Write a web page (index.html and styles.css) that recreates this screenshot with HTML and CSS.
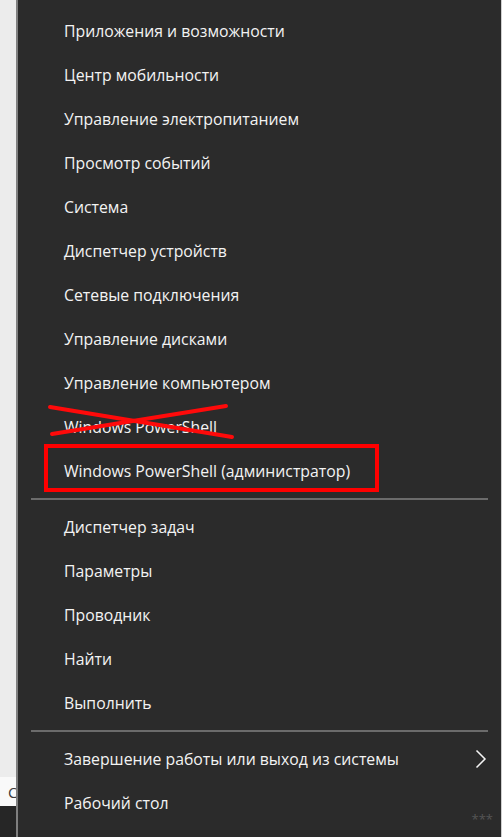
FILE: index.html
```html
<!DOCTYPE html>
<html lang="ru">
<head>
<meta charset="utf-8">
<title>Меню Win+X</title>
<link rel="stylesheet" href="styles.css">
</head>
<body>
<div class="screen">
  <div class="desktop">
    <div class="desk-top"></div>
    <div class="desk-field"><span class="desk-letter">С</span></div>
    <div class="desk-bottom"></div>
  </div>
  <div class="menu">
    <div class="group">
      <div class="item">Приложения и возможности</div>
      <div class="item">Центр мобильности</div>
      <div class="item">Управление электропитанием</div>
      <div class="item">Просмотр событий</div>
      <div class="item">Система</div>
      <div class="item">Диспетчер устройств</div>
      <div class="item">Сетевые подключения</div>
      <div class="item">Управление дисками</div>
      <div class="item">Управление компьютером</div>
      <div class="item">Windows PowerShell</div>
      <div class="item">Windows PowerShell (администратор)</div>
    </div>
    <div class="sep"></div>
    <div class="group">
      <div class="item">Диспетчер задач</div>
      <div class="item">Параметры</div>
      <div class="item">Проводник</div>
      <div class="item">Найти</div>
      <div class="item">Выполнить</div>
    </div>
    <div class="sep"></div>
    <div class="group">
      <div class="item item-sub">
        <span>Завершение работы или выход из системы</span>
        <svg class="chev" width="12" height="20" viewBox="0 0 12 20"><path d="M1.5 1.5 L10 10 L1.5 18.5" fill="none" stroke="#f4f4f4" stroke-width="1.5"/></svg>
      </div>
      <div class="item">Рабочий стол</div>
    </div>
    <div class="mark">***</div>
  </div>
  <svg class="annot" width="502" height="837" viewBox="0 0 502 837">
    <line x1="50" y1="407" x2="232" y2="437" stroke="#ff0a0a" stroke-width="4" stroke-linecap="round"/>
    <line x1="52" y1="434" x2="226" y2="406" stroke="#ff0a0a" stroke-width="4" stroke-linecap="round"/>
    <rect x="46" y="446" width="331" height="44" fill="none" stroke="#ff0000" stroke-width="4"/>
  </svg>
</div>
</body>
</html>
```
FILE: styles.css
```css
html, body {
  margin: 0;
  padding: 0;
  background: #2b2b2b;
}
.screen {
  position: relative;
  display: flex;
  width: 502px;
  height: 837px;
  overflow: hidden;
  font-family: "Open Sans", "Noto Sans", "Liberation Sans", sans-serif;
}
.desktop {
  width: 16px;
  flex: none;
  display: flex;
  flex-direction: column;
  overflow: hidden;
}
.desk-top {
  height: 777px;
  background: #ececec;
}
.desk-field {
  height: 29px;
  background: #f9f9f9;
  display: flex;
  align-items: center;
  padding-left: 8px;
  box-sizing: border-box;
}
.desk-letter {
  font-size: 15px;
  color: #3a3a3a;
}
.desk-bottom {
  flex: 1;
  background: #262626;
}
.menu {
  position: relative;
  flex: 1;
  background: #2b2b2b;
  border-left: 2px solid #7f7f7f;
  border-right: 1px solid #cfcfcf;
  padding-top: 9px;
  box-sizing: border-box;
}
.group {
  display: flex;
  flex-direction: column;
}
.item {
  height: 44px;
  display: flex;
  align-items: center;
  padding-left: 46px;
  color: #f3f3f3;
  font-size: 15.8px;
  letter-spacing: 0;
  white-space: nowrap;
}
.item-sub {
  justify-content: space-between;
  padding-right: 14px;
}
.chev {
  display: block;
}
.sep {
  height: 2px;
  margin: 5px 13px 5px 13px;
  background: #6b6b6b;
}
.mark {
  position: absolute;
  right: 8px;
  bottom: 9px;
  font-size: 13px;
  color: #555555;
  letter-spacing: 0;
}
.annot {
  position: absolute;
  left: 0;
  top: 0;
  pointer-events: none;
}
```
